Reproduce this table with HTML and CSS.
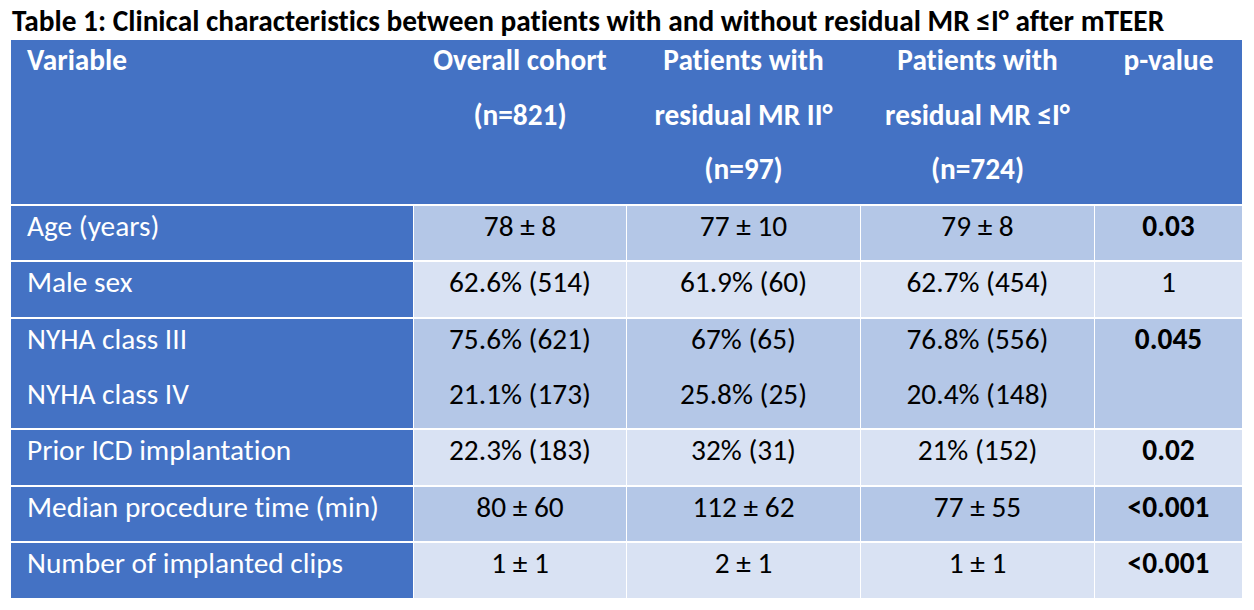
FILE: index.html
```html
<!DOCTYPE html>
<html lang="en">
<head>
<meta charset="utf-8">
<title>Table 1</title>
<link rel="stylesheet" href="styles.css">
</head>
<body>
<div class="page">
  <h1 class="title">Table 1: Clinical characteristics between patients with and without residual MR ≤I° after mTEER</h1>
  <div class="table">
    <div class="row head">
      <div class="cell first"><div class="txt">Variable</div></div>
      <div class="cell"><div class="txt">Overall cohort<br>(n=821)</div></div>
      <div class="cell"><div class="txt">Patients with<br>residual MR II°<br>(n=97)</div></div>
      <div class="cell"><div class="txt">Patients with<br>residual MR ≤I°<br>(n=724)</div></div>
      <div class="cell"><div class="txt">p-value</div></div>
    </div>
    <div class="row dark">
      <div class="cell first"><div class="txt">Age (years)</div></div>
      <div class="cell"><div class="txt">78 ± 8</div></div>
      <div class="cell"><div class="txt">77 ± 10</div></div>
      <div class="cell"><div class="txt">79 ± 8</div></div>
      <div class="cell"><div class="txt"><b>0.03</b></div></div>
    </div>
    <div class="row light">
      <div class="cell first"><div class="txt">Male sex</div></div>
      <div class="cell"><div class="txt">62.6% (514)</div></div>
      <div class="cell"><div class="txt">61.9% (60)</div></div>
      <div class="cell"><div class="txt">62.7% (454)</div></div>
      <div class="cell"><div class="txt">1</div></div>
    </div>
    <div class="row dark">
      <div class="cell first"><div class="txt">NYHA class III<br>NYHA class IV</div></div>
      <div class="cell"><div class="txt">75.6% (621)<br>21.1% (173)</div></div>
      <div class="cell"><div class="txt">67% (65)<br>25.8% (25)</div></div>
      <div class="cell"><div class="txt">76.8% (556)<br>20.4% (148)</div></div>
      <div class="cell"><div class="txt"><b>0.045</b></div></div>
    </div>
    <div class="row light">
      <div class="cell first"><div class="txt">Prior ICD implantation</div></div>
      <div class="cell"><div class="txt">22.3% (183)</div></div>
      <div class="cell"><div class="txt">32% (31)</div></div>
      <div class="cell"><div class="txt">21% (152)</div></div>
      <div class="cell"><div class="txt"><b>0.02</b></div></div>
    </div>
    <div class="row dark">
      <div class="cell first"><div class="txt">Median procedure time (min)</div></div>
      <div class="cell"><div class="txt">80 ± 60</div></div>
      <div class="cell"><div class="txt">112 ± 62</div></div>
      <div class="cell"><div class="txt">77 ± 55</div></div>
      <div class="cell"><div class="txt"><b>&lt;0.001</b></div></div>
    </div>
    <div class="row light">
      <div class="cell first"><div class="txt">Number of implanted clips</div></div>
      <div class="cell"><div class="txt">1 ± 1</div></div>
      <div class="cell"><div class="txt">2 ± 1</div></div>
      <div class="cell"><div class="txt">1 ± 1</div></div>
      <div class="cell"><div class="txt"><b>&lt;0.001</b></div></div>
    </div>
  </div>
</div>
</body>
</html>
```
FILE: styles.css
```css
html, body {
  margin: 0;
  padding: 0;
  background: #ffffff;
}
body {
  font-family: Carlito, Lato, "Liberation Sans", sans-serif;
  font-size: 29.33px;
  color: #000;
  font-variant-ligatures: none;
  font-feature-settings: "liga" 0, "clig" 0;
}
.page {
  padding: 0 0 0 11px;
  width: 1231px;
}
.title {
  margin: 0;
  padding: 3px 0 0 1px;
  height: 37px;
  line-height: 37px;
  font-size: 29.33px;
  font-weight: bold;
  white-space: nowrap;
}
.table {
  display: flex;
  flex-direction: column;
  gap: 2px;
  background: #ffffff;
}
.row {
  display: grid;
  grid-template-columns: 402px 212px 233px 233px 147px;
  column-gap: 1px;
  background: #ffffff;
}
.cell {
  line-height: 54.6px;
  padding: 0 0 7px;
  text-align: center;
}
.txt {
  margin-top: -7px;
}
.cell.first {
  text-align: left;
  padding-left: 16px;
  background: #4472c4;
  color: #ffffff;
}
.row.head {
  background: #4472c4;
}
.row.head .cell {
  background: #4472c4;
  color: #ffffff;
  font-weight: bold;
}
.row.dark .cell:not(.first) {
  background: #b4c7e7;
}
.row.light .cell:not(.first) {
  background: #d9e2f3;
}
b {
  font-weight: bold;
}
```
